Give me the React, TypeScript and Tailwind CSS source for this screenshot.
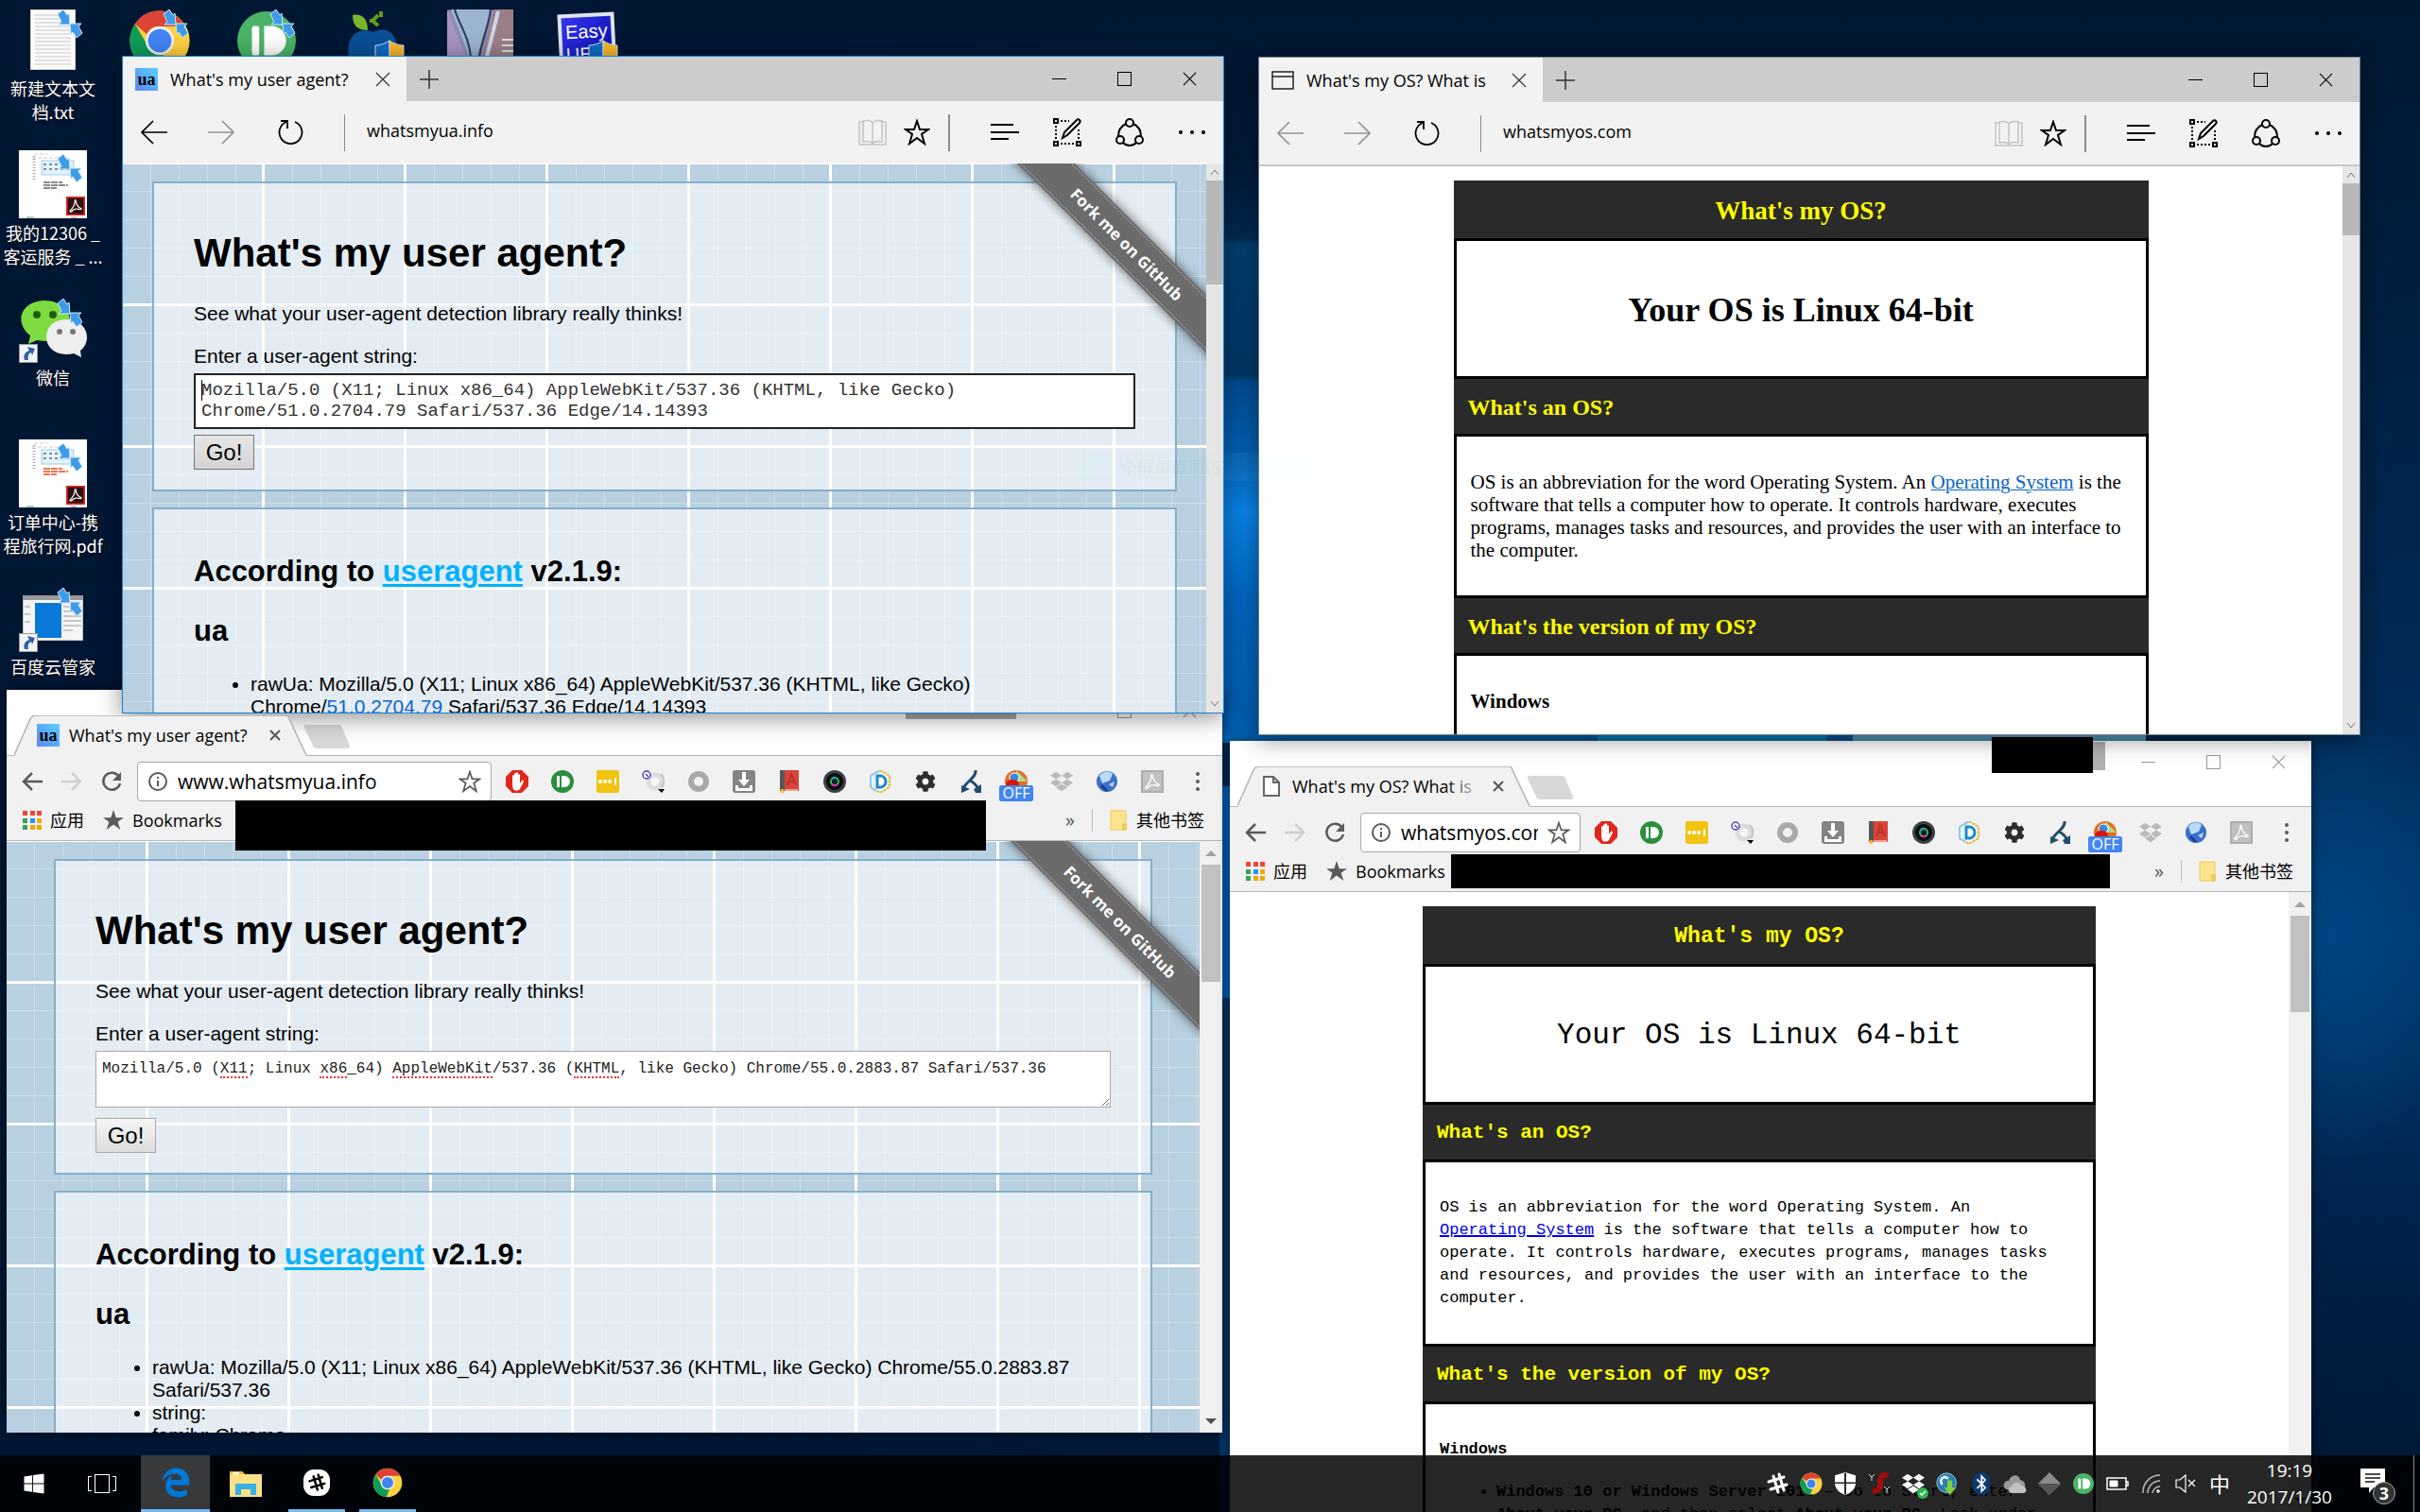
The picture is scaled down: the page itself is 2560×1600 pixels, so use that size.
import type { ReactNode } from 'react';
import { FaBluetoothB, FaDropbox, FaEdgeLegacy, FaWindows, FaCog } from 'react-icons/fa';

/* ---------- shared icons ---------- */

const ChromeLogo = ({ className }: { className: string }) => (
  <svg viewBox="0 0 48 48" className={className} aria-hidden="true">
    <circle cx="24" cy="24" r="23" fill="#fdd23e" />
    <path d="M24 1a23 23 0 0 1 20 12H24a11 11 0 0 0-10 6L5 11A23 23 0 0 1 24 1z" fill="#db4437" />
    <path d="M5 11l10 17.500a11 11 0 0 0 12 6L22 47A23 23 0 0 1 5 11z" fill="#0f9d58" />
    <circle cx="24" cy="24" r="11" fill="#f1f1f1" />
    <circle cx="24" cy="24" r="9" fill="#4285f4" />
  </svg>
);

const PushBullet = ({ className, fill }: { className: string; fill: string }) => (
  <svg viewBox="0 0 24 24" className={className} aria-hidden="true">
    <circle cx="12" cy="12" r="12" fill={fill} />
    <rect x="6" y="6" width="3" height="12" rx="1" fill="#fff" />
    <path d="M11 6h3a6 6 0 0 1 0 12h-3z" fill="#fff" />
  </svg>
);

const Acrobat = ({ className, bg, fg, edge }: { className: string; bg: string; fg: string; edge: string }) => (
  <svg viewBox="0 0 24 24" className={className} aria-hidden="true">
    <rect x="1" y="1" width="22" height="22" fill={bg} stroke={edge} strokeWidth="2" />
    <path d="M12 5c1 6 3 9 7 10 1 1-1 2-3 1-4-1-7 0-9 3-1 1-3 0-2-1 3-3 6-7 6-12 0-2 1-2 1-1z" fill="none" stroke={fg} strokeWidth="1.400" />
  </svg>
);

const SyncArrows = () => (
  <svg viewBox="0 0 30 30" className="absolute left-[59px] top-1 size-[30px]" aria-hidden="true">
    <g fill="#3d9be9" stroke="#cfe8fb" strokeWidth="1">
      <path d="M2 5l6-5 4 6 2-2 1 12H3l3-3z" />
      <path d="M28 25l-6 5-4-6-2 2-1-11h12l-3 3z" />
    </g>
  </svg>
);

const Shortcut = () => (
  <svg viewBox="0 0 20 20" className="absolute bottom-0 left-5 size-5" aria-hidden="true">
    <rect x="0.500" y="0.500" width="19" height="19" fill="#f4f4f4" stroke="#999" />
    <path d="M6 17c-2-5 1-9 5-10L9 3l8 2-3 7-1-3c-3 1-4 4-3 8z" fill="#2c61a8" />
  </svg>
);

const UacShield = ({ className }: { className: string }) => (
  <svg viewBox="0 0 32 36" className={className} aria-hidden="true">
    <path d="M16 1C12 4 6 6 1 6v10c0 9 6 15 15 19z" fill="#0f6cc4" stroke="#cde" />
    <path d="M16 1c4 3 10 5 15 5v10c0 9-6 15-15 19z" fill="#fbb62b" stroke="#cde" />
  </svg>
);

const SlackHash = ({ className, color }: { className: string; color: string }) => (
  <svg viewBox="0 0 24 24" className={className} aria-hidden="true">
    <g stroke={color} strokeWidth="3" strokeLinecap="round">
      <path d="M8 4l5 17M14 2l5 17M3 10l16-5M5 18l17-5" />
    </g>
  </svg>
);

const UaFavicon = () => (
  <span className="flex size-6 shrink-0 items-center justify-center bg-linear-to-bl from-[#5ad0fa] to-[#5b85f5] font-['Liberation_Serif',serif] text-lg leading-6 font-bold text-black" aria-hidden="true">
    ua
  </span>
);

const Cross = ({ className }: { className: string }) => (
  <svg viewBox="0 0 16 16" className={className} fill="none" stroke="currentColor" strokeWidth="1.200" aria-hidden="true">
    <path d="M1 1l14 14M15 1L1 15" />
  </svg>
);

const WindowControls = ({ tone }: { tone: string }) => (
  <div className={`flex ${tone}`}>
    <button aria-label="Minimize" className="flex h-full w-[69px] items-center justify-center">
      <span className="h-px w-[15px] bg-current" />
    </button>
    <button aria-label="Maximize" className="flex h-full w-[69px] items-center justify-center">
      <span className="size-[15px] border border-current" />
    </button>
    <button aria-label="Close" className="flex h-full w-[69px] items-center justify-center">
      <Cross className="size-[15px]" />
    </button>
  </div>
);

/* ---------- Edge ---------- */

const Book = () => (
  <svg viewBox="0 0 30 28" className="h-7 w-[30px]" fill="none" stroke="#c3c3c3" strokeWidth="1.500" aria-hidden="true">
    <path d="M5 3H1v24h28V3h-4" />
    <path d="M15 4c-2-3-7-3-10-2v22c3-1 8-1 10 2 2-3 7-3 10-2V2c-3-1-8-1-10 2zM15 4v22" />
  </svg>
);

const Star = ({ className }: { className: string }) => (
  <svg viewBox="0 0 28 28" className={className} fill="none" stroke="currentColor" strokeWidth="2" aria-hidden="true">
    <path d="M14 2l3 9h9l-7 5 3 10-8-6-8 6 3-10-7-5h9z" />
  </svg>
);

const Arrow = ({ dim, flip }: { dim: boolean; flip: boolean }) => (
  <svg viewBox="0 0 28 28" className={`size-7 ${flip ? 'rotate-180' : ''} ${dim ? 'text-[#949494]' : 'text-black'}`} fill="none" stroke="currentColor" strokeWidth="1.700" aria-hidden="true">
    <path d="M28 14H1M13 2L1 14l12 12" />
  </svg>
);

type EdgeProps = { place: string; icon: ReactNode; title: string; url: string; back: boolean; thumb: string; line: string; children: ReactNode };

const EdgeWindow = ({ place, icon, title, url, back, thumb, line, children }: EdgeProps) => (
  <section aria-label={title} className={`absolute flex flex-col border font-['Open_Sans',sans-serif] shadow-[0_4px_24px_rgba(0,0,0,0.45)] ${place}`}>
    <div className="flex h-[47px] shrink-0 bg-[#ccc]">
      <div className="flex w-[300px] items-center gap-[13px] bg-[#f2f2f2] pr-[15px] pl-[13px]">
        {icon}
        <span className="min-w-0 flex-1 overflow-hidden text-lg leading-6 whitespace-nowrap text-black">{title}</span>
        <button aria-label="Close tab" className="p-[2px] text-[#333]"><Cross className="size-4" /></button>
      </div>
      <button aria-label="New tab" className="flex w-12 items-center justify-center">
        <svg viewBox="0 0 20 20" className="size-5" stroke="#333" strokeWidth="1.500" aria-hidden="true"><path d="M10 0v20M0 10h20" /></svg>
      </button>
      <div className="ml-auto flex items-stretch pr-px"><WindowControls tone="text-black" /></div>
    </div>
    <div className={`flex h-[66px] shrink-0 items-center bg-[#f2f2f2] px-[19px] ${line}`}>
      <button aria-label="Back"><Arrow dim={!back} flip={false} /></button>
      <button aria-label="Forward" className="ml-[43px]"><Arrow dim flip /></button>
      <button aria-label="Refresh" className="ml-[46px]">
        <svg viewBox="0 0 28 28" className="size-7" fill="none" stroke="#000" strokeWidth="1.800" aria-hidden="true">
          <path d="M18 3a12 12 0 1 1-9 0M3 2h7v8" />
        </svg>
      </button>
      <div className="mr-[23px] ml-[42px] h-[39px] w-px bg-[#888]" />
      <input aria-label="Address" defaultValue={url} className="min-w-0 flex-1 bg-transparent pb-[5px] text-lg leading-6 text-black outline-none" />
      <button aria-label="Reading view"><Book /></button>
      <button aria-label="Add to favorites" className="ml-[18px]"><Star className="size-7" /></button>
      <div className="mr-[21px] ml-[19px] h-[39px] w-[2px] bg-[#8d8d8d]" />
      <button aria-label="Hub" className="ml-[22px]">
        <svg viewBox="0 0 30 28" className="h-7 w-[30px]" stroke="#000" strokeWidth="2" aria-hidden="true"><path d="M0 6h24M0 14h30M0 21h19" /></svg>
      </button>
      <button aria-label="Make a web note" className="ml-9">
        <svg viewBox="0 0 30 30" className="size-[30px]" fill="none" stroke="#000" strokeWidth="2" aria-hidden="true">
          <path d="M1 1h4v4H1zM1 25h4v4H1zM25 25h4v4h-4z" />
          <path d="M8 3h9M3 8v15M8 27h15M27 12v11" strokeDasharray="2 2" />
          <path d="M10 21l2-6L25 2c2-2 5 1 3 3L15 18z" />
        </svg>
      </button>
      <button aria-label="Share" className="ml-9">
        <svg viewBox="0 0 30 30" className="size-[30px]" fill="none" stroke="#000" strokeWidth="2" aria-hidden="true">
          <circle cx="15" cy="5" r="4" /><circle cx="5" cy="23" r="4" /><circle cx="25" cy="23" r="4" />
          <path d="M11 6c-6 3-8 8-8 13M19 6c6 3 8 8 8 13M8 26c4 4 10 4 14 0" />
        </svg>
      </button>
      <button aria-label="More actions" className="ml-[37px] flex w-7 justify-between">
        <span className="size-1 rounded-full bg-black" /><span className="size-1 rounded-full bg-black" /><span className="size-1 rounded-full bg-black" />
      </button>
    </div>
    <div className="flex min-h-0 flex-1">
      <div className="relative min-w-0 flex-1 overflow-hidden">{children}</div>
      <div className="flex w-[18px] shrink-0 flex-col items-center bg-[#e6e6e6] pb-1">
        <svg viewBox="0 0 10 18" className="h-[18px] w-[10px]" fill="none" stroke="#777" aria-hidden="true"><path d="M1 12l4-5 4 5" /></svg>
        <div className={`w-full bg-[#b8b8b8] ${thumb}`} />
        <svg viewBox="0 0 10 10" className="mt-auto size-[10px]" fill="none" stroke="#777" aria-hidden="true"><path d="M1 2l4 5 4-5" /></svg>
      </div>
    </div>
  </section>
);

/* ---------- Chrome ---------- */

const extensions: { name: string; art: ReactNode }[] = [
  { name: 'AdBlock', art: (<><path d="M7 0h10l7 7v10l-7 7H7l-7-7V7z" fill="#e1261c" /><path d="M7 12V6c0-1 2-1 2 0V4c0-1 2-1 2 0V3c0-1 2-1 2 0v2c0-1 2-1 2 0v9l2-3c1-1 2 0 2 1l-4 8c-2 2-6 2-7 0-1-2-1-5-1-8z" fill="#fff" /></>) },
  { name: 'Pushbullet', art: (<><circle cx="12" cy="12" r="12" fill="#2a8f3c" /><rect x="6" y="6" width="3" height="12" fill="#fff" /><path d="M11 6h3a6 6 0 0 1 0 12h-3z" fill="#fff" /></>) },
  { name: 'Passwords', art: (<><rect width="24" height="24" rx="2" fill="#f1c40f" /><path d="M4 12h.1M9 12h.1M14 12h.1" stroke="#fff" strokeWidth="4" strokeLinecap="round" /><path d="M20 8v8" stroke="#fff" strokeWidth="2" /></>) },
  { name: 'Search', art: (<><circle cx="14" cy="12" r="7" fill="#f6f6f6" stroke="#dcdcdc" strokeWidth="5" /><path d="M20 4a10 10 0 0 1 1 14" fill="none" stroke="#c4c4c4" strokeWidth="2" /><circle cx="5" cy="5" r="4" fill="#fff" stroke="#4a45b5" strokeWidth="1.500" /><path d="M4 4l3 3" stroke="#4a45b5" strokeWidth="1.500" /><path d="M17 20h7l-3 4z" fill="#000" /></>) },
  { name: 'Recorder', art: <circle cx="12" cy="12" r="8" fill="none" stroke="#a9a9a9" strokeWidth="6" /> },
  { name: 'Downloads', art: (<><rect width="24" height="24" rx="3" fill="#848484" /><path d="M10 2h4v8h4l-6 7-6-7h4zM3 16h3v3h12v-3h3v6H3z" fill="#fff" /></>) },
  { name: 'Dictionary', art: (<><rect x="2" width="20" height="22" fill="#dc4437" /><rect x="2" width="5" height="21" fill="#555" /><path d="M10 16l4-12 5 12M11 12h6" stroke="#b9332a" strokeWidth="2" fill="none" /><path d="M3 20h3v4H3z" fill="#fbb62b" /><path d="M7 21h14" stroke="#fff" /></>) },
  { name: 'Camera', art: (<><circle cx="12" cy="12" r="12" fill="#3c4147" /><circle cx="12" cy="12" r="9" fill="#0c0c0c" /><circle cx="12" cy="12" r="4" fill="#0a1a22" stroke="#20c45a" strokeWidth="2" /><path d="M9 15a4 4 0 0 0 6 0" stroke="#e22db4" strokeWidth="2" fill="none" /><path d="M9 9a4 4 0 0 1 4-1" stroke="#2ea0e8" strokeWidth="2" fill="none" /></>) },
  { name: 'Docs', art: (<><path d="M12 0l10 6v12l-10 6L2 18V6z" fill="#e8f4fb" stroke="#eab92f" strokeWidth="2" strokeDasharray="3 1" /><path d="M12 0L2 6v12l6 4" fill="none" stroke="#8ccbec" strokeWidth="2" /><path d="M9 6h3a6 6 0 0 1 0 12H9z" fill="#fff" stroke="#2389c9" strokeWidth="3" /></>) },
  { name: 'Settings', art: <FaCog x="1" y="1" size={22} color="#2d2d2d" /> },
  { name: 'Router', art: (<><path d="M17 0c1 8-9 11-13 19M11 11c4 2 7 5 9 9" fill="none" stroke="#1f4e6b" strokeWidth="3" /><path d="M2 16l9 4-9 4zM15 20l8-5v9h-6z" fill="#1f4e6b" /></>) },
  { name: 'Proxy', art: (<><circle cx="12" cy="12" r="12" fill="#e66b1e" /><path d="M12 0l12 12H12z" fill="#b4d68a" /><circle cx="10" cy="8" r="5" fill="#3c86d8" stroke="#fff" /><ellipse cx="8" cy="15" rx="7" ry="5" fill="#d8140c" /></>) },
  { name: 'Dropbox', art: <FaDropbox size={24} color="#b9b9b9" /> },
  { name: 'Globe', art: (<><circle cx="12" cy="12" r="11" fill="#3e6fc9" /><path d="M4 6c3-5 10-6 14-2l-3 7-8 3zM14 15l6-3-2 6z" fill="#b9dcf8" /><path d="M6 16l6 6" stroke="#1d3f96" strokeWidth="3" /></>) },
];

const AppsGrid = () => (
  <svg viewBox="0 0 20 20" className="size-5" aria-hidden="true">
    <path d="M0 0h5v5H0zM8 0h5v5H8zM15 0h5v5h-5z" fill="#f44336" />
    <path d="M0 8h5v5H0zM0 15h5v5H0z" fill="#34a35a" />
    <path d="M8 8h5v5H8z" fill="#2196f3" />
    <path d="M15 8h5v5h-5zM8 15h5v5H8zM15 15h5v5h-5z" fill="#f5a800" />
  </svg>
);

type ChromeProps = { place: string; icon: ReactNode; title: string; fade: boolean; url: string; thumb: string; cover: string; badge: ReactNode; children: ReactNode };

const ChromeWindow = ({ place, icon, title, fade, url, thumb, cover, badge, children }: ChromeProps) => (
  <section aria-label={title} className={`absolute flex flex-col bg-white font-['Open_Sans','Noto_Sans_CJK_SC',sans-serif] shadow-[0_0_12px_rgba(0,0,0,0.5)] ${place}`}>
    <div className="flex h-[69px] shrink-0 items-end">
      <div className="relative ml-2 flex h-[42px] w-[310px] items-center gap-[10px] pr-7 pl-6">
        <svg viewBox="0 0 310 43" className="absolute inset-x-0 top-0 z-10 h-[43px] w-[310px]" aria-hidden="true">
          <path d="M0 43L17 4q2-4 5-4h265q3 0 4 4l18 39z" fill="#f1f1f1" />
          <path d="M0 42L17 4q2-4 5-4h265q3 0 4 4l18 38" fill="none" stroke="#b3b3b3" strokeWidth="1.500" />
        </svg>
        <span className="relative z-10 flex w-6 justify-center">{icon}</span>
        <span className="relative z-10 min-w-0 flex-1 overflow-hidden text-lg leading-6 whitespace-nowrap text-black">
          {title}
          {fade && <span className="absolute inset-y-0 right-0 w-10 bg-linear-to-r from-transparent to-[#f1f1f1]" />}
        </span>
        <button aria-label="Close tab" className="relative z-10 text-[#555]">
          <svg viewBox="0 0 12 12" className="size-3" stroke="currentColor" strokeWidth="2" aria-hidden="true"><path d="M1 1l10 10M11 1L1 11" /></svg>
        </button>
      </div>
      <button aria-label="New tab" className="mb-[7px] -ml-1">
        <svg viewBox="0 0 50 25" className="h-[25px] w-[50px]" aria-hidden="true"><path d="M2 0h35q3 0 4 3l8 19q1 3-2 3H14q-3 0-4-3L1 3q-1-3 1-3z" fill="#d8d8d8" /></svg>
      </button>
      <div className="ml-auto flex h-full items-start">
        {badge}
        <div className="flex h-[44px] pl-[11px]"><WindowControls tone="text-[#999]" /></div>
      </div>
    </div>
    <div className="shrink-0 border-y border-[#b6b6b6] bg-[#f1f1f1] pb-[7px] text-[#5a5a5a]">
      <div className="flex h-[54px] items-center pr-[14px] pl-[15px]">
        <button aria-label="Back"><svg viewBox="0 0 24 24" className="size-6" fill="none" stroke="currentColor" strokeWidth="2.500" aria-hidden="true"><path d="M23 12H3M12 3l-9 9 9 9" /></svg></button>
        <button aria-label="Forward" className="ml-[18px] text-[#cfcfcf]"><svg viewBox="0 0 24 24" className="size-6" fill="none" stroke="currentColor" strokeWidth="2.500" aria-hidden="true"><path d="M1 12h20M12 3l9 9-9 9" /></svg></button>
        <button aria-label="Reload" className="ml-[18px]">
          <svg viewBox="0 0 24 24" className="size-6" fill="none" stroke="currentColor" strokeWidth="2.500" aria-hidden="true"><path d="M20 7a9 9 0 1 0 1 7" /><path d="M22 2v9h-9z" fill="currentColor" stroke="none" /></svg>
        </button>
        <div className="mx-[15px] flex h-[42px] min-w-0 flex-1 items-center gap-[10px] rounded-sm border border-[#a9a9a9] bg-white px-[10px]">
          <svg viewBox="0 0 22 22" className="size-[22px] shrink-0" fill="none" stroke="currentColor" strokeWidth="2" aria-hidden="true"><circle cx="11" cy="11" r="9" /><path d="M11 10v6M11 6v2" /></svg>
          <input aria-label="Address and search bar" defaultValue={url} className="min-w-0 flex-1 text-[21px] leading-7 text-black outline-none" />
          <button aria-label="Bookmark this page" className="shrink-0"><Star className="size-6" /></button>
        </div>
        <div className="flex shrink-0 gap-6">
          {extensions.map((e) => (
            <button key={e.name} aria-label={e.name} className="relative">
              <svg viewBox="0 0 24 24" className="size-6" aria-hidden="true">{e.art}</svg>
              {e.name === 'Proxy' && (
                <span className="absolute top-4 -left-[6px] w-9 rounded-xs bg-[#4285f4] text-center text-base leading-[17px] text-white">OFF</span>
              )}
            </button>
          ))}
          <button aria-label="Acrobat"><Acrobat className="size-6" bg="#c0c0c0" fg="#fff" edge="#adadad" /></button>
          <button aria-label="Menu" className="flex w-6 flex-col items-center justify-between py-[2px]">
            <span className="size-1 rounded-full bg-current" /><span className="size-1 rounded-full bg-current" /><span className="size-1 rounded-full bg-current" />
          </button>
        </div>
      </div>
      <div className="flex h-7 items-center pr-[19px] pl-[17px] text-lg leading-6 text-black">
        <AppsGrid />
        <span className="ml-[9px]">应用</span>
        <svg viewBox="0 0 24 24" className="ml-5 size-[22px]" aria-hidden="true"><path d="M12 0l3 9h9l-7 5 3 9-8-6-8 6 3-9-7-5h9z" fill="#5a5a5a" /></svg>
        <span className="ml-[9px]">Bookmarks</span>
        <span className="ml-auto text-xl text-[#555]">»</span>
        <span className="mx-[18px] h-6 w-px bg-[#bbb]" />
        <svg viewBox="0 0 18 22" className="h-[22px] w-[18px]" aria-hidden="true"><path d="M1 1h16v20H1z" fill="#ffe48f" stroke="#eecb55" /><path d="M14 21v-6h3v6z" fill="#f7d56a" stroke="#e2b93a" /></svg>
        <span className="ml-[10px]">其他书签</span>
      </div>
    </div>
    <div className="flex min-h-0 flex-1">
      <div className="relative min-w-0 flex-1 overflow-hidden">{children}</div>
      <div className="flex w-6 shrink-0 flex-col items-center bg-[#f1f1f1] pb-2">
        <svg viewBox="0 0 12 25" className="h-[25px] w-3" aria-hidden="true"><path d="M0 16l6-6 6 6z" fill="#a3a3a3" /></svg>
        <div className={`w-5 bg-[#c1c1c1] ${thumb}`} />
        <svg viewBox="0 0 12 8" className="mt-auto h-2 w-3" aria-hidden="true"><path d="M0 1l6 6 6-6z" fill="#505050" /></svg>
      </div>
    </div>
    <div className={`absolute z-20 bg-black ${cover}`} />
  </section>
);

/* ---------- whatsmyua.info ---------- */

const GRID =
  'bg-[#b8d0e0] bg-[linear-gradient(white_3px,transparent_3px),linear-gradient(90deg,white_3px,transparent_3px),linear-gradient(rgba(255,255,255,0.3)_1px,transparent_1px),linear-gradient(90deg,rgba(255,255,255,0.3)_1px,transparent_1px)] bg-size-[150px_150px,150px_150px,30px_30px,30px_30px] bg-position-[-3px_-2px,-3px_-2px,-1px_-1px,-1px_-1px]';

const Ribbon = () => (
  <div className="absolute top-0 right-0 size-[224px] overflow-hidden">
    <a href="#fork" className="absolute top-[64px] -left-5 flex h-[43px] w-80 rotate-45 items-center bg-[#6b6b6b] py-[2px] shadow-[0_0_12px_rgba(0,0,0,0.6)]">
      <span className="flex h-full w-full items-center justify-center border-y border-dotted border-[#b9b9b9] font-['Open_Sans',sans-serif] text-[17px] leading-6 font-bold text-white">Fork me on GitHub</span>
    </a>
  </div>
);

type UaProps = { id: string; inset: string; mono: string; button: string; bottom: string; value: string; marks: ReactNode; items: ReactNode };

const UaPage = ({ id, inset, mono, button, bottom, value, marks, items }: UaProps) => (
  <div className={`min-h-full pt-[19px] font-['Liberation_Sans',sans-serif] text-[21px] leading-6 text-black ${GRID} ${inset}`}>
    <div className={`flex flex-col items-start border-2 border-[#84afcb] bg-white/60 px-[42px] pt-[50px] ${bottom}`}>
      <h1 className="text-[42px] leading-[48px] font-bold">What's my user agent?</h1>
      <p className="mt-7">See what your user-agent detection library really thinks!</p>
      <label htmlFor={id} className="mt-[21px]">Enter a user-agent string:</label>
      <div className="relative mt-[6px] w-full">
        <textarea id={id} spellCheck={false} defaultValue={value} className={`block w-full overflow-hidden bg-white font-['Liberation_Mono',monospace] outline-none ${mono}`} />
        {marks}
      </div>
      <button className={`w-16 border text-2xl leading-8 ${button}`}>Go!</button>
    </div>
    <div className="mt-[17px] h-[700px] border-2 border-[#84afcb] bg-white/60 px-[42px] pt-12">
      <h2 className="text-[31px] leading-9 font-bold">
        According to <a href="#useragent" className="text-[#00b2ff] underline decoration-3 underline-offset-3">useragent</a> v2.1.9:
      </h2>
      <h2 className="mt-[27px] text-[31px] leading-9 font-bold">ua</h2>
      <ul className="mt-[26px] list-disc pl-[60px]">{items}</ul>
    </div>
    <Ribbon />
  </div>
);

/* ---------- whatsmyos.com ---------- */

type OsProps = { width: string; title: string; hero: string; head: string; body: string; about: ReactNode; more: ReactNode };

const OsPage = ({ width, title, hero, head, body, about, more }: OsProps) => (
  <div className="h-full overflow-hidden bg-white pt-[15px] text-black">
    <div className={`mx-auto text-center ${width}`}>
      <h1 className={`flex h-[61px] items-center justify-center bg-[#2a2a2a] pt-1 font-bold text-[#ff0] ${title}`}>What's my OS?</h1>
      <p className={`flex h-[149px] items-center justify-center border-3 border-black bg-white pt-[2px] leading-10 ${hero}`}>Your OS is Linux 64-bit</p>
      <div className="text-left">
        <h2 className={`flex h-[58px] items-center bg-[#2a2a2a] px-[15px] pt-[2px] font-bold text-[#ff0] ${head}`}>What's an OS?</h2>
        <p className={`border-3 border-black px-[15px] py-9 leading-6 ${body}`}>{about}</p>
        <h2 className={`flex h-[58px] items-center bg-[#2a2a2a] px-[15px] pt-[2px] font-bold text-[#ff0] ${head}`}>What's the version of my OS?</h2>
        <div className={`h-80 border-3 border-black px-[15px] py-9 leading-6 ${body}`}>
          <h3 className="font-bold">Windows</h3>
          {more}
        </div>
      </div>
    </div>
  </div>
);

/* ---------- desktop ---------- */

const PdfThumb = ({ tint, rows }: { tint: string; rows: number }) => (
  <span className="relative block h-[72px] w-[72px] bg-white">
    <svg viewBox="0 0 72 72" className="size-full" aria-hidden="true">
      <path d="M14 8h30M16 4h14" stroke="#c9c9c9" strokeWidth="1" strokeDasharray="4 2" />
      <rect x="24" y="11" width="34" height="15" fill="#e3f2fb" stroke="#9ccdea" />
      <path d="M26 15h30M26 20h30" stroke="#7d8b9a" strokeWidth="2" strokeDasharray="3 3" />
      <path d="M16 6v26" stroke="#aaa" strokeWidth="3" strokeDasharray="1 2" />
      <path d={`M26 ${rows}h20M26 ${rows + 3}h26M26 ${rows + 6}h14`} stroke={tint} strokeWidth="2" strokeDasharray="7 1" />
      <path d="M8 71h8M55 71h6" stroke="#888" />
    </svg>
    <Acrobat className="absolute right-[2px] bottom-[3px] size-5" bg="#2b0f12" fg="#fff" edge="#e2231a" />
  </span>
);

const WeChat = () => (
  <svg viewBox="0 0 72 64" className="h-16 w-[72px]" aria-hidden="true">
    <path d="M10 48l2-9C-5 26 1 3 27 2c18 0 28 12 27 24S40 46 27 45l-8-1z" fill="#7ddc3f" />
    <circle cx="19" cy="17" r="4" fill="#1c5c12" /><circle cx="36" cy="17" r="4" fill="#1c5c12" />
    <path d="M50 22c13 0 22 8 22 19 0 6-3 11-7 14l1 7-8-4c-18 4-29-6-29-17 0-12 9-19 21-19z" fill="#eee" />
    <circle cx="43" cy="35" r="3" fill="#777" /><circle cx="57" cy="35" r="3" fill="#777" />
  </svg>
);

const TextFile = () => (
  <svg viewBox="0 0 48 64" className="h-16 w-12" aria-hidden="true">
    <path d="M0 0h48v64H0z" fill="#fafafa" stroke="#aaa" />
    <path d="M5 6h24M5 10h26M5 14h30M5 18h38M5 22h38M5 26h38M5 30h38M5 34h38M5 38h38M5 42h38M5 46h38M5 50h38M5 54h38M5 58h38" stroke="#c9c9c9" />
  </svg>
);

const BaiduApp = () => (
  <svg viewBox="0 0 64 48" className="h-12 w-16" aria-hidden="true">
    <path d="M0 0h64v48H0z" fill="#f5f5f5" stroke="#888" />
    <path d="M0 0h64v5H0z" fill="#999" />
    <path d="M13 8h28v37H13z" fill="#0a78d7" />
    <path d="M43 12h19M43 17h19M43 22h19M43 27h19M43 32h19M43 37h10M2 12h6M2 20h6M2 28h6" stroke="#999" />
  </svg>
);

const column: { name: string; lines: string[]; art: ReactNode; shortcut: boolean }[] = [
  { name: 'txt', lines: ['新建文本文', '档.txt'], art: <TextFile />, shortcut: false },
  { name: 'rail', lines: ['我的12306 _', '客运服务 _ ...'], art: <PdfThumb tint="#8a8a8a" rows={34} />, shortcut: false },
  { name: 'wechat', lines: ['微信'], art: <WeChat />, shortcut: true },
  { name: 'orders', lines: ['订单中心-携', '程旅行网.pdf'], art: <PdfThumb tint="#f0744f" rows={31} />, shortcut: false },
  { name: 'baidu', lines: ['百度云管家'], art: <BaiduApp />, shortcut: true },
];

const topRow: { name: string; art: ReactNode; sync: boolean; shield: boolean }[] = [
  { name: 'Google Chrome', art: <ChromeLogo className="size-[66px]" />, sync: true, shield: false },
  { name: 'Pushbullet', art: <PushBullet className="mt-[2px] size-[62px]" fill="#4ab367" />, sync: true, shield: false },
  { name: 'Orange', sync: false, shield: true, art: (
    <svg viewBox="0 0 56 66" className="h-[66px] w-14" aria-hidden="true">
      <path d="M2 50C-2 28 12 18 28 24c14-8 26 2 26 22 0 30-50 34-52 4z" fill="#0b4f94" />
      <path d="M6 6c10-2 16 4 16 16C12 22 6 18 6 6z" fill="#7ab52c" />
      <path d="M36 2v6M33 6l-6 6 6 5M28 12h-4" stroke="#5f9c1c" strokeWidth="4" fill="none" />
    </svg>) },
  { name: 'Profiler', sync: false, shield: false, art: (
    <svg viewBox="0 0 70 66" className="h-[66px] w-[70px]" aria-hidden="true">
      <rect width="70" height="66" fill="#8f8bb0" stroke="#111" />
      <path d="M0 0l26 66H0z" fill="#a993c4" /><path d="M4 0l24 62L46 0" fill="#9db4ce" /><path d="M50 0L32 66h38V0z" fill="#9c7f86" />
      <path d="M54 2L38 66" stroke="#c9d6e6" strokeWidth="4" />
      <path d="M8 0c6 20 18 30 18 66M46 0c-2 22-12 34-14 66" stroke="#243a60" strokeWidth="2" fill="none" />
      <path d="M58 32h12M58 38h12M58 44h12M58 50h12M58 56h12" stroke="#ddd" strokeWidth="2" />
    </svg>) },
  { name: 'EasyUEFI', sync: false, shield: true, art: (
    <span className="mt-1 flex h-[62px] w-[60px] -rotate-3 flex-col items-center justify-center border-4 border-[#dfe3ee] bg-linear-to-br from-[#3434f5] to-[#0606a0] font-['Liberation_Sans',sans-serif] text-xl leading-6 text-white">
      <span>Easy</span><span>UEFI</span>
    </span>) },
];

const Wallpaper = () => (
  <svg viewBox="0 0 2560 1600" preserveAspectRatio="none" className="absolute inset-0 size-full" aria-hidden="true">
    <defs>
      <linearGradient id="edge" x1="0" y1="0" x2="0" y2="1">
        <stop offset="0" stopColor="#001731" /><stop offset="0.450" stopColor="#002a55" /><stop offset="0.620" stopColor="#00376c" /><stop offset="0.850" stopColor="#001f45" /><stop offset="1" stopColor="#001733" />
      </linearGradient>
      <linearGradient id="side" x1="0" y1="0" x2="1" y2="0">
        <stop offset="0" stopColor="#001733" /><stop offset="0.350" stopColor="#001733" /><stop offset="0.550" stopColor="#001733" stopOpacity="0" />
      </linearGradient>
      <linearGradient id="beam" x1="0" y1="0" x2="0" y2="1">
        <stop offset="0" stopColor="#001b3a" /><stop offset="0.120" stopColor="#002a52" /><stop offset="0.130" stopColor="#003f70" /><stop offset="0.360" stopColor="#003867" /><stop offset="0.370" stopColor="#004c90" /><stop offset="0.490" stopColor="#0060b5" /><stop offset="0.600" stopColor="#0a86ea" /><stop offset="0.750" stopColor="#0068c4" /><stop offset="1" stopColor="#005db0" />
      </linearGradient>
      <radialGradient id="glow">
        <stop offset="0" stopColor="#004683" /><stop offset="1" stopColor="#004683" stopOpacity="0" />
      </radialGradient>
    </defs>
    <rect width="2560" height="1600" fill="url(#edge)" />
    <rect width="2560" height="1600" fill="url(#side)" />
    <ellipse cx="2470" cy="990" rx="160" ry="240" fill="url(#glow)" />
    <path d="M1290 180h50v604h-50z" fill="url(#beam)" />
    <path d="M1290 776h400v10h-400z" fill="#0068b8" />
    <path d="M1690 776h242v10h-242z" fill="#0090d4" />
    <path d="M1932 776h28v10h-28z" fill="#0b5fae" />
    <path d="M1960 776h310v10h-310z" fill="#5eaed8" />
    <path d="M1290 832h12v224h-12z" fill="#0062c0" />
    <path d="M1290 1056h12v544h-12z" fill="#003468" />
  </svg>
);

const TrayItem = ({ label, children }: { label: string; children: ReactNode }) => (
  <button aria-label={label} className="flex w-9 items-center justify-center">{children}</button>
);

const Taskbar = () => (
  <footer className="relative z-30 flex h-[60px] w-full bg-black/85 font-['Open_Sans','Noto_Sans_CJK_SC',sans-serif] text-white">
    <button aria-label="Start" className="flex w-[72px] items-center justify-center"><FaWindows className="size-6" /></button>
    <button aria-label="Task view" className="flex w-[71px] items-center justify-center gap-[3px]">
      <span className="h-4 w-1 border border-r-0 border-white" /><span className="h-5 w-4 border border-white" /><span className="h-4 w-1 border border-l-0 border-white" />
    </button>
    <button aria-label="Microsoft Edge" className="ml-[6px] flex w-[73px] items-center justify-center border-b-3 border-[#76b9ed] bg-[#38393b]"><FaEdgeLegacy className="size-8 text-[#0078d7]" /></button>
    <button aria-label="File Explorer" className="ml-[2px] flex w-[72px] items-center justify-center">
      <svg viewBox="0 0 34 28" className="h-7 w-[34px]" aria-hidden="true"><path d="M0 1h13l3 3h18v24H0z" fill="#ffe08a" /><path d="M0 1h13l3 3H0z" fill="#f5b82e" /><path d="M3 3h7" stroke="#fff" strokeWidth="2" /><path d="M6 26V14h22v12h-6v-6h-10v6z" fill="#38b1e6" /></svg>
    </button>
    <button aria-label="Slack" className="relative mx-[9px] flex w-[60px] items-center justify-center border-b-3 border-[#76b9ed]">
      <span className="flex size-7 items-center justify-center rounded-[11px] bg-white"><SlackHash className="size-5" color="#000" /></span>
    </button>
    <button aria-label="Google Chrome" className="ml-[6px] flex w-[60px] items-center justify-center border-b-3 border-[#76b9ed]"><ChromeLogo className="size-8" /></button>
    <div className="ml-auto flex">
      <TrayItem label="Slack"><SlackHash className="size-6" color="#fff" /></TrayItem>
      <TrayItem label="Chrome"><ChromeLogo className="size-6" /></TrayItem>
      <TrayItem label="Defender">
        <svg viewBox="0 0 24 30" className="h-6 w-6" preserveAspectRatio="none" aria-hidden="true"><path d="M12 0l11 4v10c0 8-5 13-11 16C6 27 1 22 1 14V4z" fill="#fff" /><path d="M12 1v28M1 14h22" stroke="#262626" strokeWidth="2" /></svg>
      </TrayItem>
      <TrayItem label="Mouse tool">
        <svg viewBox="0 0 24 24" className="size-6" aria-hidden="true"><path d="M21 4c-6-4-8 2-8 7s-2 9-8 9" fill="none" stroke="#a00d10" strokeWidth="6" /><path d="M1 2l3 3 3-3M4 5v4M17 15l3 3 3-3M20 18v4" stroke="#ddd" fill="none" /></svg>
      </TrayItem>
      <TrayItem label="Dropbox">
        <span className="relative"><FaDropbox className="size-6" /><svg viewBox="0 0 12 12" className="absolute -right-1 -bottom-1 size-3" aria-hidden="true"><circle cx="6" cy="6" r="6" fill="#2db84b" /><path d="M3 6l2 2 4-4" stroke="#fff" strokeWidth="1.500" fill="none" /></svg></span>
      </TrayItem>
      <TrayItem label="Download manager">
        <svg viewBox="0 0 26 28" className="size-6" aria-hidden="true"><circle cx="12" cy="13" r="12" fill="#2f7fae" stroke="#9ad3ec" /><path d="M7 15a5 5 0 1 1 7-7" stroke="#e8f7ff" strokeWidth="3" fill="none" /><path d="M13 10h6v9h5l-8 9-7-9h4z" fill="#7fd03c" /></svg>
      </TrayItem>
      <TrayItem label="Bluetooth"><span className="flex h-6 w-[18px] items-center justify-center rounded-[9px] bg-[#0a3a72]"><FaBluetoothB className="size-5" /></span></TrayItem>
      <TrayItem label="OneDrive">
        <svg viewBox="0 0 26 20" className="h-5 w-[26px]" aria-hidden="true"><path d="M3 16c-5-4-1-10 3-9C8 0 17-1 18 6c6 1 7 8 2 10z" fill="#999" /><path d="M9 20c-5-1-4-7 0-7 1-5 8-6 10-1 6 0 7 7 3 8z" fill="#c0c0c0" /></svg>
      </TrayItem>
      <TrayItem label="Diamond tool"><svg viewBox="0 0 24 24" className="size-6" aria-hidden="true"><path d="M12 0l12 12-12 12L0 12z" fill="#8a8a8a" /><path d="M12 24l12-12H0z" fill="#555" /></svg></TrayItem>
      <TrayItem label="Pushbullet"><PushBullet className="size-[22px]" fill="#4ab367" /></TrayItem>
      <TrayItem label="Battery"><svg viewBox="0 0 24 14" className="h-[14px] w-6" fill="none" stroke="#fff" aria-hidden="true"><path d="M1 1h20v12H1zM21 5h2v4h-2" strokeWidth="1.500" /><path d="M4 4h8v6H4z" fill="#fff" /></svg></TrayItem>
      <TrayItem label="Wi-Fi"><svg viewBox="0 0 20 20" className="size-5" fill="none" stroke="#bbb" strokeWidth="1.500" aria-hidden="true"><path d="M1 20A18 18 0 0 1 19 1M6 20A13 13 0 0 1 19 7M11 20a8 8 0 0 1 8-7" /><circle cx="17" cy="18" r="1" fill="#fff" stroke="#fff" /></svg></TrayItem>
      <TrayItem label="Volume muted"><svg viewBox="0 0 22 20" className="h-5 w-[22px]" fill="none" stroke="#fff" aria-hidden="true"><path d="M1 6h4l6-5v18l-6-5H1zM14 6l7 7M21 6l-7 7" strokeWidth="1.200" /></svg></TrayItem>
      <button className="w-9 text-center text-[22px] leading-6">中</button>
      <button className="flex w-28 flex-col items-center justify-center gap-1 text-[19px] leading-6"><span>19:19</span><span>2017/1/30</span></button>
      <button aria-label="Notifications" className="relative flex w-16 items-center justify-center">
        <svg viewBox="0 0 26 28" className="-mt-1 h-7 w-[26px]" aria-hidden="true"><path d="M0 0h26v20H14l-5 6v-6H0z" fill="#fff" /><path d="M5 6h16M5 10h16M5 14h10" stroke="#111" strokeWidth="1.500" /></svg>
        <span className="absolute top-7 left-8 flex size-6 items-center justify-center rounded-full border border-[#aaa] bg-[#333] text-lg leading-5 font-bold">3</span>
      </button>
      <span className="mr-[6px] ml-[11px] w-px bg-[#888]" />
    </div>
  </footer>
);

const caption = 'text-lg leading-[25px] whitespace-nowrap text-white [text-shadow:0_1px_3px_black]';

export default function App() {
  return (
    <main className="relative flex h-screen w-full flex-col justify-end overflow-hidden bg-[#001733]">
      <Wallpaper />

      <div className="absolute top-0 left-0 flex pt-[6px] font-['Noto_Sans_CJK_SC','Open_Sans',sans-serif]">
        <div className="w-[112px]">
          {column.map((c) => (
            <button key={c.name} className="relative flex h-[153px] w-full flex-col items-center">
              <span className="relative mb-[3px] flex h-[72px] w-full items-center justify-center">
                {c.art}
                <SyncArrows />
                {c.shortcut && <Shortcut />}
              </span>
              {c.lines.map((l) => <span key={l} className={caption}>{l}</span>)}
            </button>
          ))}
        </div>
        {topRow.map((t) => (
          <button key={t.name} aria-label={t.name} className="relative flex h-20 w-[113px] items-start justify-center pt-1">
            {t.art}
            {t.sync && <SyncArrows />}
            {t.shield && <UacShield className="absolute top-9 left-[58px] h-9 w-8" />}
          </button>
        ))}
      </div>

      <ChromeWindow
        place="left-[7px] top-[730px] h-[786px] w-[1286px]"
        icon={<UaFavicon />}
        title="What's my user agent?"
        fade={false}
        url="www.whatsmyua.info"
        thumb="h-[124px]"
        cover="left-[242px] top-[117px] h-[53px] w-[794px]"
        badge={<span className="h-[31px] w-[117px] bg-[#a8a8a8]" />}
      >
        <UaPage
          id="ua-chrome"
          inset="px-[50px]"
          mono="h-[60px] border border-[#a9a9a9] px-[6px] pt-[6px] text-base leading-6 text-[#222]"
          button="mt-[11px] h-[37px] border-[#a9a9a9] bg-linear-to-b from-[#f6f6f6] to-[#dcdcdc]"
          bottom="pb-[21px]"
          value="Mozilla/5.0 (X11; Linux x86_64) AppleWebKit/537.36 (KHTML, like Gecko) Chrome/55.0.2883.87 Safari/537.36"
          marks={
            <span className="pointer-events-none absolute top-0 left-[7px] block font-['Liberation_Mono',monospace] text-base" aria-hidden="true">
              <span className="absolute top-[27px] left-[13ch] w-[3ch] border-b-2 border-dotted border-red-500" />
              <span className="absolute top-[27px] left-[24ch] w-[3ch] border-b-2 border-dotted border-red-500" />
              <span className="absolute top-[27px] left-[32ch] w-[11ch] border-b-2 border-dotted border-red-500" />
              <span className="absolute top-[27px] left-[52ch] w-[5ch] border-b-2 border-dotted border-red-500" />
            </span>
          }
          items={
            <>
              <li>rawUa: Mozilla/5.0 (X11; Linux x86_64) AppleWebKit/537.36 (KHTML, like Gecko) Chrome/55.0.2883.87 Safari/537.36</li>
              <li>string:</li>
              <li>family: Chrome</li>
            </>
          }
        />
      </ChromeWindow>

      <ChromeWindow
        place="left-[1301px] top-[784px] bottom-0 w-[1144px]"
        icon={<svg viewBox="0 0 18 22" className="h-[22px] w-[18px]" fill="#fff" stroke="#666" strokeWidth="2" aria-hidden="true"><path d="M1 1h10l6 6v14H1zM11 1v6h6" /></svg>}
        title="What's my OS? What is"
        fade
        url="whatsmyos.com"
        thumb="h-[102px]"
        cover="left-[234px] top-[120px] h-9 w-[697px]"
        badge={<span className="relative mt-px h-[30px] w-[13px] bg-[#b0b0b0]"><span className="absolute -top-[5px] right-[13px] h-[38px] w-[107px] bg-black" /></span>}
      >
        <OsPage
          width="w-[712px] font-['Liberation_Mono','Noto_Sans_CJK_SC',monospace]"
          title="text-[23px]"
          hero="text-[31px]"
          head="text-[21px]"
          body="text-[17px]"
          about={<>OS is an abbreviation for the word Operating System. An<br /><a href="#os" className="text-[#00e] underline decoration-2">Operating System</a> is the software that tells a computer how to<br />operate. It controls hardware, executes programs, manages tasks<br />and resources, and provides the user with an interface to the<br />computer.</>}
          more={
            <ul className="mt-[21px] list-disc pl-[60px] whitespace-nowrap">
              <li><b>Windows 10 or Windows Server 2016</b> – Go to Start, enter<br /><b>About your PC</b>, and then select <b>About your PC</b>. Look under</li>
            </ul>
          }
        />
      </ChromeWindow>

      <EdgeWindow
        place="left-[129px] top-[59px] h-[696px] w-[1166px] border-[#1883d7]"
        icon={<UaFavicon />}
        title="What's my user agent?"
        url="whatsmyua.info"
        back
        thumb="h-[110px]"
        line=""
      >
        <UaPage
          id="ua-edge"
          inset="px-[31px]"
          mono="h-[59px] resize-none border-2 border-[#222] px-[6px] pt-[5px] text-[19px] leading-[22px] text-[#333]"
          button="mt-[6px] h-[37px] border-[#777] bg-linear-to-b from-[#e6e6e6] to-[#d4d4d4]"
          bottom="pb-[21px]"
          value="Mozilla/5.0 (X11; Linux x86_64) AppleWebKit/537.36 (KHTML, like Gecko) Chrome/51.0.2704.79 Safari/537.36 Edge/14.14393"
          marks={<span className="absolute top-[7px] left-2 h-[22px] w-px bg-black" aria-hidden="true" />}
          items={<li>rawUa: Mozilla/5.0 (X11; Linux x86_64) AppleWebKit/537.36 (KHTML, like Gecko) Chrome/<a href="tel:5102704" className="text-[#0a64d2]">51.0.2704.79</a> Safari/537.36 Edge/14.14393</li>}
        />
      </EdgeWindow>

      <EdgeWindow
        place="left-[1331px] top-[60px] h-[718px] w-[1166px] border-[#6f7f8f]"
        icon={<svg viewBox="0 0 24 20" className="h-5 w-6 shrink-0" fill="none" stroke="#222" strokeWidth="1.500" aria-hidden="true"><path d="M1 1h22v18H1zM1 6h22" /></svg>}
        title="What's my OS? What is"
        url="whatsmyos.com"
        back={false}
        thumb="h-[55px]"
        line="box-content border-b-2 border-[#c8c8c8]"
      >
        <OsPage
          width="w-[735px] font-['Liberation_Serif',serif]"
          title="text-[27px]"
          hero="text-4xl font-bold"
          head="text-2xl"
          body="text-[21px]"
          about={<>OS is an abbreviation for the word Operating System. An <a href="#os" className="text-[#0a64c8] underline decoration-1">Operating System</a> is the software that tells a computer how to operate. It controls hardware, executes programs, manages tasks and resources, and provides the user with an interface to the computer.</>}
          more={null}
        />
      </EdgeWindow>

      <div className="pointer-events-none absolute top-[479px] left-[1143px] flex h-[30px] w-[236px] items-center bg-sky-200/5 pl-[42px] font-['Noto_Sans_CJK_SC',sans-serif] text-lg leading-6 text-black/5">全屏幕截图(S)</div>

      <Taskbar />
    </main>
  );
}
